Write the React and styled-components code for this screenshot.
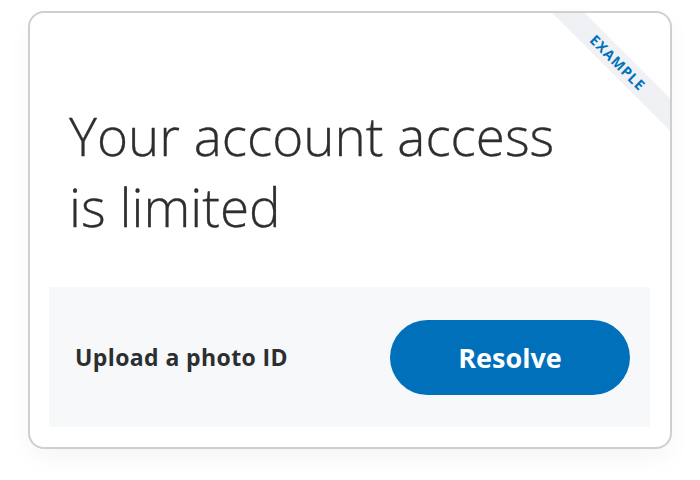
import styled, { createGlobalStyle } from "styled-components";

const GlobalStyle = createGlobalStyle`
  html, body {
    margin: 0;
    padding: 0;
    background: #ffffff;
  }
  body {
    font-family: "Open Sans", "Liberation Sans", sans-serif;
    color: #2c2e2f;
  }
`;

const Page = styled.div`
  width: 700px;
  height: 480px;
  box-sizing: border-box;
  padding: 11px 28px;
`;

const Card = styled.section`
  position: relative;
  overflow: hidden;
  box-sizing: border-box;
  width: 644px;
  height: 438px;
  padding: 20px 20px 20px 19px;
  border: 2px solid #cfcfcf;
  border-radius: 16px;
  background: #ffffff;
  box-shadow: 0 10px 24px rgba(0, 0, 0, 0.04);
  display: flex;
  flex-direction: column;
  justify-content: flex-end;
`;

const Ribbon = styled.div`
  position: absolute;
  top: 38px;
  left: 488px;
  width: 200px;
  height: 23px;
  transform: rotate(45deg);
  background: #eff1f4;
  color: #0070ba;
  font-size: 14px;
  font-weight: 700;
  letter-spacing: 1px;
  line-height: 23px;
  text-align: center;
`;

const Title = styled.h1`
  margin: 0 0 45px 20px;
  font-size: 53px;
  font-weight: 300;
  line-height: 71px;
  color: #2c2e2f;
  letter-spacing: 0;
  -webkit-text-stroke: 0.3px #2c2e2f;
`;

const Panel = styled.div`
  height: 140px;
  background: #f7f8fa;
  display: flex;
  align-items: center;
  justify-content: space-between;
  padding: 0 20px 0 26px;
`;

const Task = styled.span`
  font-size: 23px;
  font-weight: 700;
  letter-spacing: 0.4px;
  color: #2c2e2f;
`;

const Button = styled.button`
  width: 240px;
  height: 75px;
  border: none;
  border-radius: 38px;
  background: #0070ba;
  color: #ffffff;
  font-family: "Open Sans", "Liberation Sans", sans-serif;
  font-size: 27px;
  font-weight: 700;
  cursor: pointer;
`;

export default function App() {
  return (
    <>
      <GlobalStyle />
      <Page>
        <Card>
          <Ribbon>EXAMPLE</Ribbon>
          <Title>
            Your account access
            <br />
            is limited
          </Title>
          <Panel>
            <Task>Upload a photo ID</Task>
            <Button>Resolve</Button>
          </Panel>
        </Card>
      </Page>
    </>
  );
}
